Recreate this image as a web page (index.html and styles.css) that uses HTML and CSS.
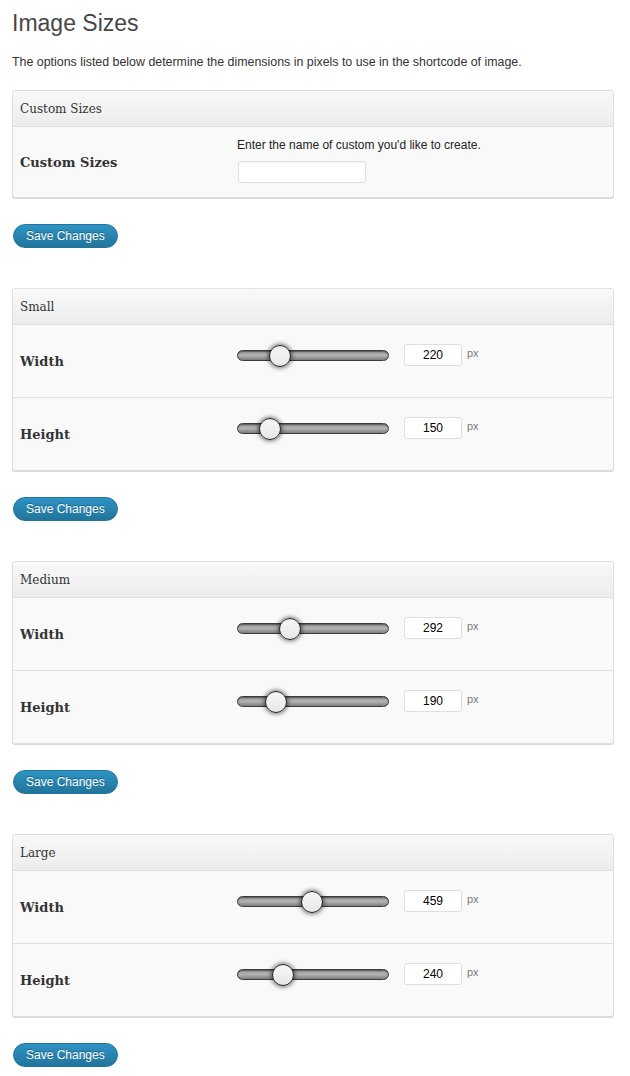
FILE: index.html
```html
<!DOCTYPE html>
<html lang="en">
<head>
<meta charset="utf-8">
<title>Image Sizes</title>
<link rel="stylesheet" href="styles.css">
</head>
<body>
<div class="wrap">
  <h1 class="title">Image Sizes</h1>
  <p class="desc">The options listed below determine the dimensions in pixels to use in the shortcode of image.</p>

  <section class="panel">
    <div class="panel-head">Custom Sizes</div>
    <div class="row row-custom">
      <div class="label">Custom Sizes</div>
      <div class="control control-custom">
        <div class="hint">Enter the name of custom you'd like to create.</div>
        <input class="text-input" type="text" value="">
      </div>
    </div>
  </section>
  <button class="btn" type="button">Save Changes</button>

  <section class="panel">
    <div class="panel-head">Small</div>
    <div class="row">
      <div class="label">Width</div>
      <div class="control">
        <div class="slider"><span class="thumb" style="left:31px"></span></div>
        <input class="num" type="text" value="220"><span class="unit">px</span>
      </div>
    </div>
    <div class="row">
      <div class="label">Height</div>
      <div class="control">
        <div class="slider"><span class="thumb" style="left:21px"></span></div>
        <input class="num" type="text" value="150"><span class="unit">px</span>
      </div>
    </div>
  </section>
  <button class="btn" type="button">Save Changes</button>

  <section class="panel">
    <div class="panel-head">Medium</div>
    <div class="row">
      <div class="label">Width</div>
      <div class="control">
        <div class="slider"><span class="thumb" style="left:41px"></span></div>
        <input class="num" type="text" value="292"><span class="unit">px</span>
      </div>
    </div>
    <div class="row">
      <div class="label">Height</div>
      <div class="control">
        <div class="slider"><span class="thumb" style="left:27px"></span></div>
        <input class="num" type="text" value="190"><span class="unit">px</span>
      </div>
    </div>
  </section>
  <button class="btn" type="button">Save Changes</button>

  <section class="panel">
    <div class="panel-head">Large</div>
    <div class="row">
      <div class="label">Width</div>
      <div class="control">
        <div class="slider"><span class="thumb" style="left:63px"></span></div>
        <input class="num" type="text" value="459"><span class="unit">px</span>
      </div>
    </div>
    <div class="row">
      <div class="label">Height</div>
      <div class="control">
        <div class="slider"><span class="thumb" style="left:34px"></span></div>
        <input class="num" type="text" value="240"><span class="unit">px</span>
      </div>
    </div>
  </section>
  <button class="btn" type="button">Save Changes</button>
</div>
</body>
</html>
```

FILE: styles.css
```css
html, body {
  margin: 0;
  padding: 0;
  background: #ffffff;
}

.wrap {
  padding: 0 16px 0 12px;
  font-family: "Liberation Sans", Arial, sans-serif;
  color: #333;
}

.title {
  margin: 10px 0 0;
  font-family: "Liberation Sans", Arial, sans-serif;
  font-size: 23px;
  line-height: 26px;
  font-weight: normal;
  color: #464646;
}

.desc {
  margin: 18px 0 0;
  font-size: 12.4px;
  line-height: 16px;
  color: #333;
}

.panel {
  border: 1px solid #dfdfdf;
  border-radius: 3px;
  background: #f9f9f9;
  box-shadow: 0 1px 0 #d9d9d9;
}

.desc + .panel {
  margin-top: 20px;
}

.btn + .panel {
  margin-top: 40px;
}

.panel-head {
  height: 35px;
  display: flex;
  align-items: center;
  padding: 0 7px;
  border-bottom: 1px solid #dfdfdf;
  border-radius: 3px 3px 0 0;
  background: linear-gradient(#f9f9f9, #ececec);
  font-family: "DejaVu Serif", Georgia, serif;
  font-size: 12px;
  color: #333;
}

.row {
  display: flex;
  height: 72px;
}

.row + .row {
  border-top: 1px solid #dfdfdf;
}

.row-custom {
  height: 70px;
}

.label {
  width: 217px;
  padding-left: 7px;
  align-self: center;
  font-family: "DejaVu Serif", Georgia, serif;
  font-weight: bold;
  font-size: 13px;
  color: #333;
}

.control {
  display: flex;
  align-items: center;
  height: 22px;
  padding-top: 19px;
}

.control-custom {
  display: block;
  height: auto;
  padding-top: 10px;
}

.hint {
  font-size: 12px;
  line-height: 16px;
  color: #222;
}

.text-input {
  display: block;
  box-sizing: border-box;
  margin: 8px 0 0 1px;
  width: 128px;
  height: 22px;
  padding: 0 4px;
  border: 1px solid #dfdfdf;
  border-radius: 3px;
  background: #fff;
  box-shadow: inset 0 1px 2px rgba(0, 0, 0, 0.05);
  font-family: "Liberation Sans", Arial, sans-serif;
  font-size: 12px;
}

.slider {
  position: relative;
  box-sizing: border-box;
  width: 152px;
  height: 11px;
  border: 1px solid #3c3c3c;
  border-radius: 6px;
  background: linear-gradient(#8a8a8a, #b5b5b5 45%, #a8a8a8 60%, #7c7c7c);
  box-shadow: inset 0 1px 1px rgba(0, 0, 0, 0.35);
}

.thumb {
  position: absolute;
  top: -6px;
  box-sizing: border-box;
  width: 22px;
  height: 22px;
  border: 1px solid #1e1e1e;
  border-radius: 50%;
  background: linear-gradient(#f6f6f6, #e8e8e8);
  box-shadow: 0 0 4px 1px rgba(0, 0, 0, 0.55);
}

.num {
  box-sizing: border-box;
  margin-left: 15px;
  width: 58px;
  height: 22px;
  padding: 0;
  border: 1px solid #dfdfdf;
  border-radius: 3px;
  background: #fff;
  text-align: center;
  font-family: "Liberation Sans", Arial, sans-serif;
  font-size: 12px;
  color: #000;
}

.unit {
  margin-left: 5px;
  margin-top: -4px;
  font-size: 11px;
  color: #7a7a7a;
}

.btn {
  display: block;
  box-sizing: border-box;
  margin: 26px 0 0 1px;
  height: 24px;
  padding: 0 12px;
  border: 1px solid #21759b;
  border-radius: 12px;
  background: linear-gradient(#2e93c4, #21759b);
  color: #fff;
  font-family: "Liberation Sans", Arial, sans-serif;
  font-size: 12px;
  line-height: 22px;
  text-shadow: 0 -1px 0 rgba(0, 0, 0, 0.3);
  cursor: pointer;
}
```
